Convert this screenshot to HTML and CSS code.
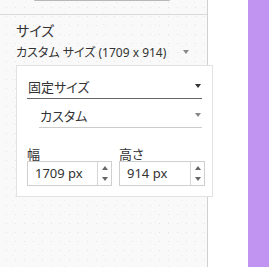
FILE: index.html
```html
<!DOCTYPE html>
<html lang="ja">
<head>
    <meta charset="UTF-8">
    <meta name="viewport" content="width=device-width, initial-scale=1.0">
    <title>サイズ</title>
    <link rel="stylesheet" href="styles.css">
</head>
<body>
    <div class="panel">
        <div class="toolbar">
            <div class="toolbar-stub"></div>
        </div>

        <section class="size-section">
            <h2 class="section-title">サイズ</h2>
            <div class="dropdown">
                <span class="dropdown-text">カスタム サイズ (1709 x 914)</span>
                <span class="caret caret-light"></span>
            </div>

            <!-- Size popup -->
            <div class="size-card">
                <div class="select select-main">
                    <span>固定サイズ</span>
                    <span class="caret caret-dark"></span>
                </div>
                <div class="select select-sub">
                    <span>カスタム</span>
                    <span class="caret caret-light"></span>
                </div>

                <div class="dims">
                    <div class="dim">
                        <label class="dim-label">幅</label>
                        <div class="spin-input">
                            <span class="spin-value">1709 px</span>
                            <div class="spin-buttons">
                                <span class="spin-up"></span>
                                <span class="spin-down"></span>
                            </div>
                        </div>
                    </div>
                    <div class="dim">
                        <label class="dim-label">高さ</label>
                        <div class="spin-input">
                            <span class="spin-value">914 px</span>
                            <div class="spin-buttons">
                                <span class="spin-up"></span>
                                <span class="spin-down"></span>
                            </div>
                        </div>
                    </div>
                </div>
            </div>
        </section>
    </div>

    <div class="gutter"></div>
    <div class="accent"></div>
</body>
</html>
```

FILE: styles.css
```css
/* General Styles */
body {
    margin: 0;
    padding: 0;
    width: 269px;
    height: 267px;
    display: flex;
    overflow: hidden;
    font-family: 'Noto Sans', 'Noto Sans CJK JP', sans-serif;
    font-feature-settings: "palt";
    font-size: 13px;
    color: #333;
    background: white;
}

.panel {
    position: relative;
    z-index: 1;
    width: 207px;
    flex: none;
    border-right: 1px solid #d0d0d0;
    background-color: #f9f9f9;
    background-image:
        radial-gradient(circle, #e4e4e4 0.7px, transparent 0.9px),
        radial-gradient(circle, #ececec 0.7px, transparent 0.9px);
    background-size: 9px 9px, 13px 11px;
    background-position: 2px 3px, 6px 8px;
}

.gutter {
    width: 40px;
    flex: none;
    background: white;
}

.accent {
    flex: 1;
    background: #c294f1;
}

/* Toolbar */
.toolbar {
    height: 14px;
    border-bottom: 1px solid #dadada;
}

.toolbar-stub {
    width: 136px;
    height: 1px;
    margin-left: 34px;
    background: #b8b8b8;
    border-radius: 0 0 2px 2px;
}

/* Size section */
.size-section {
    padding: 6px 0 0 16px;
}

.section-title {
    margin: 0;
    font-size: 14px;
    font-weight: normal;
    line-height: 20px;
}

.dropdown {
    display: flex;
    align-items: center;
    justify-content: space-between;
    width: 173px;
    height: 22px;
}

.dropdown-text {
    font-size: 12px;
    white-space: nowrap;
}

.caret {
    width: 0;
    height: 0;
    border-left: 3.5px solid transparent;
    border-right: 3.5px solid transparent;
    border-top: 4px solid #777;
}

.caret-dark {
    border-top-color: #333;
}

.caret-light {
    border-top-color: #888;
}

/* Popup card */
.size-card {
    width: 175px;
    margin-top: 2px;
    padding: 8px 10px 10px;
    background: white;
    border: 1px solid #e2e2e2;
}

.select {
    display: flex;
    align-items: center;
    justify-content: space-between;
    height: 24px;
    padding-right: 1px;
    white-space: nowrap;
}

.select-main {
    padding-left: 1px;
    border-bottom: 1px solid #666;
}

.select-sub {
    margin-top: 4px;
    margin-left: 12px;
    padding-left: 1px;
    border-bottom: 1px solid #ccc;
}

.dims {
    display: flex;
    gap: 7px;
    margin-top: 19px;
}

.dim {
    display: flex;
    flex-direction: column;
}

.dim:first-child .spin-input {
    width: 83px;
}

.dim:last-child .spin-input {
    width: 84px;
}

.dim-label {
    line-height: 14px;
}

.spin-input {
    display: flex;
    height: 23px;
    border: 1px solid #cfcfcf;
}

.spin-value {
    flex: 1;
    padding-left: 7px;
    line-height: 23px;
    white-space: nowrap;
}

.spin-buttons {
    width: 13px;
    display: flex;
    flex-direction: column;
    border-left: 1px solid #d6d6d6;
}

.spin-up,
.spin-down {
    flex: 1;
    display: flex;
    align-items: center;
    justify-content: center;
}

.spin-up::before,
.spin-down::before {
    content: "";
    width: 0;
    height: 0;
    border-left: 3.5px solid transparent;
    border-right: 3.5px solid transparent;
}

.spin-up::before {
    border-bottom: 4px solid #666;
}

.spin-down::before {
    border-top: 4px solid #666;
}
```
